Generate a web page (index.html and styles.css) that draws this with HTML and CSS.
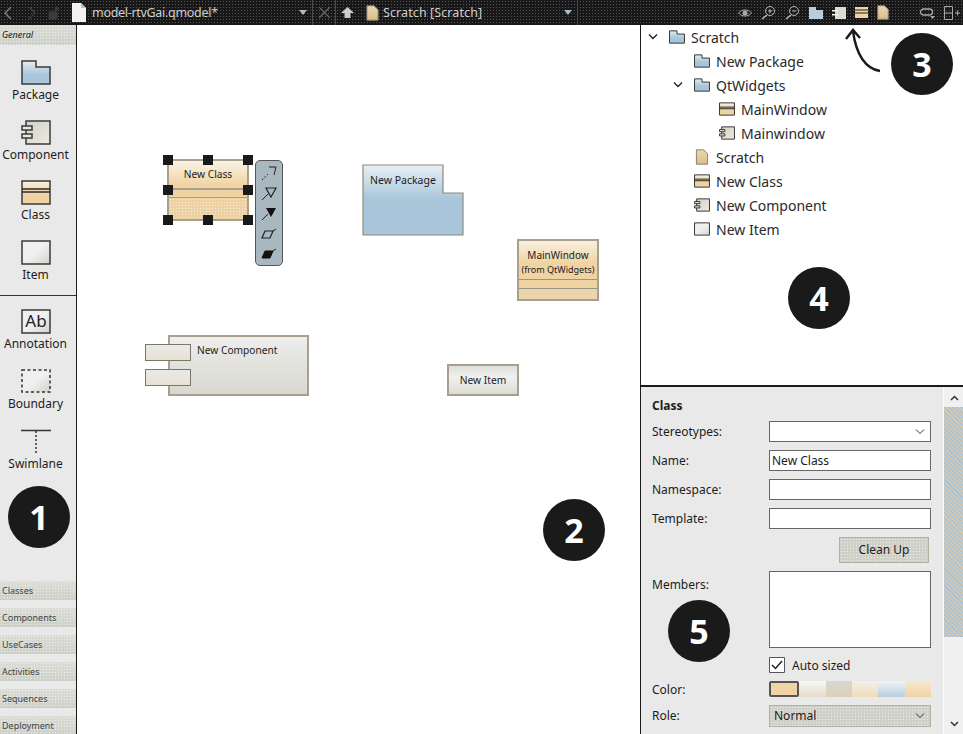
FILE: index.html
```html
<!DOCTYPE html>
<html lang="en">
<head>
  <meta charset="UTF-8" />
  <title>Qt Creator Model Editor</title>
  <link rel="stylesheet" href="styles.css">
</head>
<body>
  <svg class="defs" width="0" height="0">
    <defs>
      <linearGradient id="gPkg" x1="0" y1="0" x2="0" y2="1"><stop offset="0" stop-color="#e4edf3"/><stop offset=".6" stop-color="#a8c5da"/></linearGradient>
      <linearGradient id="gPkgBig" x1="0" y1="0" x2="0" y2="1"><stop offset="0" stop-color="#e8f0f5"/><stop offset=".5" stop-color="#a8c5da"/></linearGradient>
      <linearGradient id="gClass" x1="0" y1="0" x2="0" y2="1"><stop offset="0" stop-color="#f8efdf"/><stop offset=".6" stop-color="#f0d3a3"/></linearGradient>
      <linearGradient id="gComp" x1="0" y1="0" x2="1" y2="1"><stop offset="0" stop-color="#d2d2ca"/><stop offset="1" stop-color="#efe9dc"/></linearGradient>
      <linearGradient id="gItem" x1="0" y1="0" x2="1" y2="1"><stop offset=".5" stop-color="#f0f0f0"/><stop offset="1" stop-color="#d2d2ca"/></linearGradient>
      <linearGradient id="gDoc" x1="0" y1="0" x2="0" y2="1"><stop offset="0" stop-color="#ecd6ae"/><stop offset="1" stop-color="#d9bd8c"/></linearGradient>

      <symbol id="i-pkg" viewBox="0 0 30 25"><path d="M1 1h14v6h14v17H1z" fill="url(#gPkg)" stroke="#3a3a3a"/></symbol>
      <symbol id="i-comp" viewBox="0 0 30 25">
        <path d="M5 1h24v23H5z" fill="url(#gComp)" stroke="#3a3a3a"/>
        <path d="M1 6h10v4H1zM1 14h10v4H1z" fill="#e6e6e0" stroke="#3a3a3a"/>
      </symbol>
      <symbol id="i-class" viewBox="0 0 30 25">
        <path d="M1 1h28v23H1z" fill="url(#gClass)" stroke="#3a3a3a"/>
        <path d="M1 9h28M1 12h28" fill="none" stroke="#2a2a2a"/>
      </symbol>
      <symbol id="i-item" viewBox="0 0 30 25"><path d="M1 1h28v23H1z" fill="url(#gItem)" stroke="#3a3a3a"/></symbol>
      <symbol id="i-doc" viewBox="0 0 16 20"><path d="M1 1h9l5 5v13H1z" fill="url(#gDoc)" stroke="#8a8272"/></symbol>
    </defs>
  </svg>

  <header class="topbar">
    <div class="seg seg-file">
      <svg class="nav" width="10" height="14" viewBox="0 0 10 14"><path d="M8 1L2 7l6 6" fill="none" stroke="#7d7d7d" stroke-width="1.5"/></svg>
      <svg class="nav nav-dim" width="10" height="14" viewBox="0 0 10 14"><path d="M2 1l6 6-6 6" fill="none" stroke="#3c3c3c" stroke-width="1.5"/></svg>
      <svg class="nav nav-lock" width="14" height="14" viewBox="0 0 14 14"><path d="M1 6h8v7H1zM7 6V3a2 2 0 0 1 4 0" fill="#3c3c3c" stroke="#3c3c3c"/></svg>
      <svg class="file-ico" width="15" height="19" viewBox="0 0 15 19"><path d="M1 0h9l5 5v14H1z" fill="#f2f2f2"/><path d="M10 0v5h5" fill="#bdbdbd"/></svg>
      <span class="title">model-rtvGai.qmodel*</span>
      <span class="tri"></span>
    </div>
    <div class="seg seg-close">
      <svg width="11" height="11" viewBox="0 0 11 11"><path d="M0 0l11 11M11 0L0 11" stroke="#6f6f6f" stroke-width="1.2"/></svg>
    </div>
    <div class="seg seg-scratch">
      <svg class="up" width="13" height="11" viewBox="0 0 13 11"><path d="M6.500 0L13 6H9.500v5h-6V6H0z" fill="#c9ced2"/></svg>
      <svg class="scr-doc" width="13" height="16"><use href="#i-doc"/></svg>
      <span class="title">Scratch [Scratch]</span>
      <span class="tri"></span>
    </div>
    <div class="bar-tools">
      <svg width="14" height="10" viewBox="0 0 14 10"><path d="M0.500 5C3 1 11 1 13.500 5 11 9 3 9 0.500 5z" fill="none" stroke="#a8a8a8"/><circle cx="7" cy="5" r="2.500" fill="#a8a8a8"/></svg>
      <svg width="15" height="15" viewBox="0 0 15 15"><circle cx="9" cy="6" r="4.500" fill="none" stroke="#b5b5b5"/><path d="M6 10l-5 4" stroke="#b5b5b5" stroke-width="1.600"/><path d="M7 6h4M9 4v4" stroke="#b5b5b5"/></svg>
      <svg width="15" height="15" viewBox="0 0 15 15"><circle cx="9" cy="6" r="4.500" fill="none" stroke="#b5b5b5"/><path d="M6 10l-5 4" stroke="#b5b5b5" stroke-width="1.600"/><path d="M7 6h4" stroke="#b5b5b5"/></svg>
      <svg width="14" height="12" viewBox="0 0 14 12"><path d="M0 0h7v3h7v9H0z" fill="#b7cddd"/></svg>
      <svg width="14" height="12" viewBox="0 0 14 12"><path d="M3 0h11v12H3z" fill="#dcdcd2"/><path d="M0 3h6v1.500H0zM0 7h6v1.500H0z" fill="#f5f5f5"/></svg>
      <svg width="13" height="11" viewBox="0 0 13 11"><path d="M0 0h13v11H0z" fill="#f0d3a3"/><path d="M0 3h13M0 6h13" stroke="#222" stroke-width="1.200"/></svg>
      <svg width="12" height="15"><use href="#i-doc"/></svg>
      <svg class="tool-link" width="15" height="12" viewBox="0 0 15 12"><rect x="0.500" y="2" width="12" height="6" rx="3" fill="none" stroke="#a8a8a8" stroke-width="1.300"/><path d="M10 9h5l-2.500 3z" fill="#a8a8a8"/></svg>
      <svg width="16" height="14" viewBox="0 0 16 14"><path d="M0.500 0.500h8v13h-8zM0.500 7h8M11 7h5M13.500 4.500v5" fill="none" stroke="#a8a8a8"/></svg>
    </div>
  </header>

  <main class="workspace">
    <aside class="toolbox">
      <div class="tab tab-active">General</div>
      <div class="tool"><svg width="30" height="25"><use href="#i-pkg"/></svg><span>Package</span></div>
      <div class="tool"><svg width="30" height="25"><use href="#i-comp"/></svg><span>Component</span></div>
      <div class="tool"><svg width="30" height="25"><use href="#i-class"/></svg><span>Class</span></div>
      <div class="tool"><svg width="30" height="25"><use href="#i-item"/></svg><span>Item</span></div>
      <hr class="tool-sep">
      <div class="tool">
        <svg width="30" height="25" viewBox="0 0 30 25"><path d="M1 1h28v23H1z" fill="url(#gItem)" stroke="#3a3a3a"/><text x="15" y="18" class="ab">Ab</text></svg>
        <span>Annotation</span>
      </div>
      <div class="tool">
        <svg width="30" height="25" viewBox="0 0 30 25"><path d="M1 1h28v22H1z" fill="url(#gItem)" stroke="#333" stroke-width="1.500" stroke-dasharray="3 2.500"/></svg>
        <span>Boundary</span>
      </div>
      <div class="tool">
        <svg width="30" height="25" viewBox="0 0 30 25"><path d="M0 1.500h30" stroke="#333" stroke-width="1.500"/><path d="M15 2v22" stroke="#333" stroke-width="1.500" stroke-dasharray="2 2"/></svg>
        <span>Swimlane</span>
      </div>
      <div class="tabs">
        <div class="tab">Classes</div>
        <div class="tab">Components</div>
        <div class="tab">UseCases</div>
        <div class="tab">Activities</div>
        <div class="tab">Sequences</div>
        <div class="tab">Deployment</div>
      </div>
    </aside>

    <section class="canvas">
      <div class="el el-class">
        <div class="cls-name">New Class</div>
        <div class="cls-mid"></div>
        <div class="cls-low"></div>
        <i class="hd hd-tl"></i><i class="hd hd-tc"></i><i class="hd hd-tr"></i>
        <i class="hd hd-ml"></i><i class="hd hd-mr"></i>
        <i class="hd hd-bl"></i><i class="hd hd-bc"></i><i class="hd hd-br"></i>
      </div>

      <div class="el el-rel">
        <svg width="18" height="16" viewBox="0 0 16 16"><path d="M1 15l6-6" stroke="#222" stroke-dasharray="2 1.500"/><path d="M8 2h7l-2 8" fill="none" stroke="#222"/></svg>
        <svg width="18" height="16" viewBox="0 0 16 16"><path d="M1 15l6-6" stroke="#222"/><path d="M5 3h10l-5 9z" fill="none" stroke="#222" stroke-width="1.200"/></svg>
        <svg width="18" height="16" viewBox="0 0 16 16"><path d="M1 15l6-6" stroke="#222"/><path d="M5 3h10l-5 9z" fill="#111"/></svg>
        <svg width="18" height="16" viewBox="0 0 16 16"><path d="M4 6h8l-3 7H1z" fill="none" stroke="#222" stroke-width="1.200"/><path d="M12 6l3-2" stroke="#222"/></svg>
        <svg width="18" height="16" viewBox="0 0 16 16"><path d="M4 6h8l-3 7H1z" fill="#111" stroke="#111"/><path d="M12 6l3-2" stroke="#222"/></svg>
      </div>

      <div class="el el-pkg">
        <svg width="102" height="72" viewBox="0 0 102 72"><path d="M1 1h80v28h20v42H1z" fill="url(#gPkgBig)" stroke="#8f8a7c" stroke-width="1.200"/></svg>
        <span>New Package</span>
      </div>

      <div class="el el-main">
        <div class="main-name">MainWindow<small>(from QtWidgets)</small></div>
        <div class="main-mid"></div>
        <div class="main-low"></div>
      </div>

      <div class="el el-comp">
        <span>New Component</span>
        <i class="port port-a"></i>
        <i class="port port-b"></i>
      </div>

      <div class="el el-item">New Item</div>
    </section>

    <aside class="side">
      <ul class="tree">
        <li class="row d0"><svg class="chev" width="10" height="6" viewBox="0 0 10 6"><path d="M1 0.500l4 4 4-4" fill="none" stroke="#222" stroke-width="1.400"/></svg><svg width="16" height="14"><use href="#i-pkg"/></svg>Scratch</li>
        <li class="row d1"><svg width="16" height="14"><use href="#i-pkg"/></svg>New Package</li>
        <li class="row d1"><svg class="chev" width="10" height="6" viewBox="0 0 10 6"><path d="M1 0.500l4 4 4-4" fill="none" stroke="#222" stroke-width="1.400"/></svg><svg width="16" height="14"><use href="#i-pkg"/></svg>QtWidgets</li>
        <li class="row d2"><svg width="16" height="14"><use href="#i-class"/></svg>MainWindow</li>
        <li class="row d2"><svg width="16" height="14"><use href="#i-comp"/></svg>Mainwindow</li>
        <li class="row d1"><svg width="16" height="16"><use href="#i-doc"/></svg>Scratch</li>
        <li class="row d1"><svg width="16" height="14"><use href="#i-class"/></svg>New Class</li>
        <li class="row d1"><svg width="16" height="14"><use href="#i-comp"/></svg>New Component</li>
        <li class="row d1"><svg width="16" height="14"><use href="#i-item"/></svg>New Item</li>
      </ul>

      <div class="props">
        <form class="form" onsubmit="return false;">
          <h2>Class</h2>
          <div class="field">
            <label>Stereotypes:</label>
            <div class="input combo"><svg width="10" height="6" viewBox="0 0 10 6"><path d="M1 0.500l4 4 4-4" fill="none" stroke="#333"/></svg></div>
          </div>
          <div class="field"><label>Name:</label><div class="input">New Class</div></div>
          <div class="field"><label>Namespace:</label><div class="input"></div></div>
          <div class="field"><label>Template:</label><div class="input"></div></div>
          <div class="actions"><div class="btn">Clean Up</div></div>
          <div class="field field-top"><label>Members:</label><div class="input area"></div></div>
          <div class="check-row">
            <svg width="16" height="16" viewBox="0 0 16 16"><path d="M0.500 0.500h15v15H0.500z" fill="#fff" stroke="#555"/><path d="M3 8l3.500 3.500L13 4" fill="none" stroke="#222" stroke-width="1.500"/></svg>
            <span>Auto sized</span>
          </div>
          <div class="field field-color">
            <label>Color:</label>
            <div class="swatches">
              <i class="sw sw-on"></i><i class="sw sw-2"></i><i class="sw sw-3"></i><i class="sw sw-4"></i><i class="sw sw-5"></i><i class="sw sw-6"></i>
            </div>
          </div>
          <div class="field">
            <label>Role:</label>
            <div class="input role">Normal<svg width="10" height="6" viewBox="0 0 10 6"><path d="M1 0.500l4 4 4-4" fill="none" stroke="#333"/></svg></div>
          </div>
        </form>
        <div class="scroll">
          <svg width="9" height="6" viewBox="0 0 9 6"><path d="M1 5l3.500-3.500L8 5" fill="none" stroke="#333" stroke-width="1.500"/></svg>
          <div class="thumb"></div>
          <svg width="9" height="6" viewBox="0 0 9 6"><path d="M1 1l3.500 3.500L8 1" fill="none" stroke="#333" stroke-width="1.500"/></svg>
        </div>
      </div>
    </aside>
  </main>

  <svg class="arrow" width="44" height="52" viewBox="0 0 44 52"><path d="M40 46C26 44 16 30 13 6M6 14l7-9 7 8" fill="none" stroke="#1b1a1b" stroke-width="2.400"/></svg>
  <div class="num num-1">1</div>
  <div class="num num-2">2</div>
  <div class="num num-3">3</div>
  <div class="num num-4">4</div>
  <div class="num num-5">5</div>
</body>
</html>
```

FILE: styles.css
```css
:root {
  --dots: radial-gradient(#eeeeea .6px, transparent .8px) 0 0 / 3px 3px;
}
html, body { margin: 0; padding: 0; width: 963px; height: 734px; overflow: hidden; }
body {
  position: relative;
  display: flex;
  flex-direction: column;
  background: #fff;
  color: #1c1c1c;
  font-family: "Noto Sans", "Open Sans", sans-serif;
  font-size: 12px;
}
svg { display: block; flex: none; }
symbol * { vector-effect: non-scaling-stroke; }
.defs { position: absolute; }

/* top bar */
.topbar {
  display: flex;
  align-items: center;
  flex: none;
  height: 25px;
  background: radial-gradient(#555 .6px, transparent .8px) 0 0 / 3px 3px, #181818;
  color: #cfcfcf;
}
.seg { display: flex; align-items: center; height: 25px; box-sizing: border-box; border-right: 1px solid #4a4a4a; }
.seg-file { width: 313px; padding-left: 3px; }
.nav-dim { margin-left: 14px; }
.nav-lock { margin-left: 11px; }
.file-ico { margin-left: 9px; }
.seg-file .title { margin-left: 6px; letter-spacing: -.3px; }
.title { font-size: 12.5px; letter-spacing: .1px; white-space: nowrap; }
.tri { width: 0; height: 0; margin-left: auto; margin-right: 5px; border: 4px solid transparent; border-top: 5px solid #a9bcc9; border-bottom: 0; }
.seg-close { width: 23px; justify-content: center; }
.seg-scratch { width: 242px; padding-left: 5px; }
.scr-doc { margin-left: 12px; margin-right: 4px; }
.bar-tools { display: flex; align-items: center; gap: 9px; margin-left: auto; padding-right: 3px; }
.tool-link { margin-left: 22px; }

/* layout */
.workspace { display: flex; flex: 1; min-height: 0; }

/* left toolbox */
.toolbox {
  display: flex;
  flex-direction: column;
  flex: none;
  width: 76px;
  background: #e9e9e9;
  border-right: 1px solid #1b1b1b;
  overflow: hidden;
}
.tab {
  height: 19px;
  padding-left: 2px;
  background: var(--dots), linear-gradient(#dcdcd6, #ccd0c8);
  color: #444;
  font-size: 9px;
  line-height: 20px;
}
.tab-active { height: 20px; margin-bottom: 10px; font-style: italic; color: #222; }
.tool {
  display: flex;
  flex-direction: column;
  align-items: center;
  box-sizing: border-box;
  height: 60px;
  padding: 5px 5px 0 0;
  flex: none;
}
.tool svg { stroke-width: 1.5; }
.tool span { margin-top: 2px; line-height: 16px; }
.tool-sep { width: 76px; height: 1px; margin: 0 0 8px; border: 0; background: #333; flex: none; }
.ab { font-size: 17px; fill: #222; text-anchor: middle; }
.tabs { display: flex; flex-direction: column; gap: 8px; margin-top: auto; margin-bottom: -1px; }

/* diagram */
.canvas { position: relative; flex: 1; min-width: 0; background: #fff; font-size: 10.2px; }
.el { position: absolute; box-sizing: border-box; }
.el-class {
  left: 90px; top: 134px; width: 82px; height: 62px;
  display: flex; flex-direction: column;
  border: 2px solid #a89f8e;
  background: #f0d3a3;
}
.cls-name { height: 27px; text-align: center; line-height: 27px; background: linear-gradient(#faf3e6, #f0d3a3 90%); border-bottom: 2px solid #a89f8e; }
.cls-mid { height: 7px; border-bottom: 1px solid #a89f8e; }
.cls-low { flex: 1; background: var(--dots), linear-gradient(#f0d3a3, #ecd0a0); }
.hd { position: absolute; width: 10px; height: 10px; background: #1b1a1b; }
.hd-tl { left: -6px; top: -6px; }
.hd-tc { left: 34px; top: -6px; }
.hd-tr { left: 74px; top: -6px; }
.hd-ml { left: -6px; top: 24px; }
.hd-mr { left: 74px; top: 24px; }
.hd-bl { left: -6px; top: 54px; }
.hd-bc { left: 34px; top: 54px; }
.hd-br { left: 74px; top: 54px; }

.el-rel {
  left: 178px; top: 135px; width: 28px; height: 106px;
  display: flex; flex-direction: column; align-items: center; justify-content: space-around;
  padding: 2px 0;
  border: 1px solid #555;
  border-radius: 5px;
  background: #a9b8c0;
}
.el-pkg { left: 285px; top: 139px; width: 102px; height: 72px; font-size: 10.5px; }
.el-pkg span { position: absolute; left: 8px; top: 9px; }
.el-main {
  left: 440px; top: 214px; width: 82px; height: 62px;
  border: 2px solid #a89f8e;
  background: #f0d3a3;
  text-align: center;
  display: flex; flex-direction: column;
  font-size: 10px;
}
.main-name { height: 39px; padding-top: 7px; box-sizing: border-box; line-height: 14px; background: linear-gradient(#f8efdf, #f0d3a3 60%); border-bottom: 1px solid #9a9486; }
.main-name small { display: block; font-size: 9px; line-height: 15px; }
.main-mid { height: 8px; border-bottom: 1px solid #9a9486; }
.main-low { flex: 1; background: #ecd4ab; }
.el-comp {
  left: 91px; top: 310px; width: 141px; height: 61px;
  padding: 5px 0 0 27px;
  border: 2px solid #a89f8e;
  background: linear-gradient(#eeeeee, #e6e6e2 30%, #d9d8d0 100%);
  line-height: 16px;
}
.port {
  position: absolute; left: -25px; width: 46px; height: 17px; box-sizing: border-box;
  border: 1px solid #7c7668;
  background: linear-gradient(#e9e9e9, #e8e2d4);
}
.port-a { top: 7px; }
.port-b { top: 32px; }
.el-item {
  left: 370px; top: 339px; width: 72px; height: 32px;
  border: 2px solid #a89f8e;
  background: linear-gradient(#dedfda, #f0f0f0 40%, #dcdcd6);
  text-align: center;
  line-height: 28px;
}

/* right side */
.side {
  display: flex;
  flex-direction: column;
  flex: none;
  width: 323px;
  border-left: 1px solid #1b1b1b;
  box-sizing: border-box;
}
.tree { flex: none; height: 360px; margin: 0; padding: 0; list-style: none; font-size: 14px; }
.row { position: relative; display: flex; align-items: center; gap: 6px; height: 24px; color: #2a2a2a; }
.d0 { padding-left: 28px; }
.d1 { padding-left: 53px; }
.d2 { padding-left: 78px; }
.chev { position: absolute; margin-left: -21px; }

.props { flex: 1; display: flex; min-height: 0; border-top: 2px solid #1b1b1b; background: #e9e9e9; overflow: hidden; }
.form { flex: 1; display: flex; flex-direction: column; gap: 8px; padding: 11px 12px 0 11px; }
.form h2 { margin: 0 0 -1px; font-size: 12px; line-height: 16px; }
.field { display: flex; align-items: center; height: 21px; flex: none; }
.field label { width: 117px; flex: none; }
.input {
  display: flex; align-items: center; justify-content: space-between;
  box-sizing: border-box;
  width: 162px; height: 21px;
  padding: 0 2px;
  border: 1px solid #666;
  background: #fff;
}
.combo { justify-content: flex-end; padding-right: 5px; }
.actions { display: flex; justify-content: flex-end; height: 26px; padding-right: 2px; }
.btn {
  box-sizing: border-box;
  width: 90px; height: 26px;
  border: 1px solid #b5af9f;
  background: var(--dots), #cfd0c8;
  text-align: center;
  line-height: 24px;
}
.field-top { align-items: flex-start; height: 77px; }
.field-top label { margin-top: 5px; }
.area { height: 77px; }
.check-row { display: flex; align-items: center; gap: 7px; height: 16px; margin: 1px 0 0 117px; }
.field-color { height: 16px; }
.swatches { display: flex; width: 162px; height: 16px; }
.sw { flex: 1; height: 16px; box-sizing: border-box; }
.sw-on { background: #f0d3a3; border: 2px solid #555; border-radius: 2px; }
.sw-2 { background: linear-gradient(#f8f8f6, #e4dccb); }
.sw-3 { background: linear-gradient(#d8d8d0, #dccfb8); }
.sw-4 { background: linear-gradient(#f4f0ea, #f0dcb8); }
.sw-5 { background: linear-gradient(#f2f4f4, #b8cfe0); }
.sw-6 { background: linear-gradient(#f6e8d2, #f0d3a3); }
.role { padding: 0 5px 0 4px; border-color: #b5af9f; background: var(--dots), #cfd0c8; height: 22px; }

.scroll {
  display: flex; flex-direction: column; align-items: center;
  flex: none;
  width: 20px;
  padding-top: 8px;
  background: #f0f0f0;
  border-left: 1px solid #fafafa;
}
.thumb {
  width: 20px; height: 230px; margin-top: 6px; margin-bottom: 84px;
  background: repeating-linear-gradient(45deg, #a9c4d8 0 1.500px, #d5c8ae 1.500px 3px);
}

/* callouts */
.arrow { position: absolute; left: 840px; top: 25px; }
.num {
  position: absolute;
  width: 62px; height: 62px;
  border-radius: 50%;
  background: #1b1a1b;
  color: #fff;
  font-family: "Open Sans", "Noto Sans", sans-serif;
  font-size: 34px;
  font-weight: 700;
  line-height: 62px;
  text-align: center;
}
.num-1 { left: 8px; top: 486px; }
.num-2 { left: 543px; top: 499px; }
.num-3 { left: 891px; top: 33px; }
.num-4 { left: 788px; top: 267px; }
.num-5 { left: 668px; top: 600px; }
```
